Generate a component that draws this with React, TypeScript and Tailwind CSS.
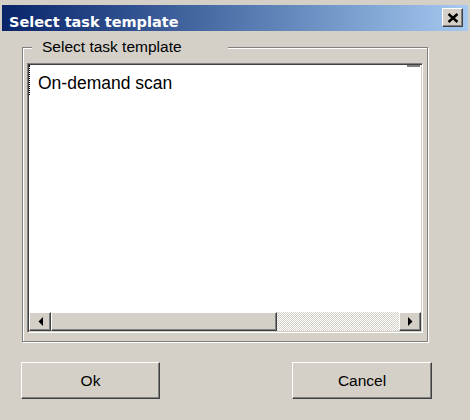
import React from "react";

const raised =
  "border border-t-white border-l-white border-r-[#404040] border-b-[#404040] shadow-[inset_-1px_-1px_0_#808080]";

function ScrollArrow({ dir }: { dir: "left" | "right" }) {
  return (
    <div className={`w-[22px] h-full bg-[#d4d0c8] flex items-center justify-center ${raised}`}>
      <svg width="5" height="9" viewBox="0 0 5 9">
        <polygon points={dir === "left" ? "5,0 5,9 0.5,4.5" : "0,0 0,9 4.5,4.5"} fill="#000" />
      </svg>
    </div>
  );
}

export default function App() {
  return (
    <div className="w-[470px] h-[420px] bg-[#d4d0c8] overflow-hidden font-['Liberation_Sans',Arial,sans-serif] text-black">
      {/* title bar */}
      <div className="mt-[5px] mx-[2px] h-[26px] flex justify-between bg-gradient-to-r from-[#0a246a] to-[#a6caf0]">
        <div className="pl-[7px] pt-[8px] text-[14.5px] leading-[18px] font-bold text-white font-['DejaVu_Sans',sans-serif]">
          Select task template
        </div>
        <button
          className={`mt-[3px] mr-[5px] w-[21px] h-[19px] bg-[#d4d0c8] flex items-center justify-center ${raised}`}
        >
          <svg width="12" height="10" viewBox="0 0 12 10">
            <path d="M1.5 1 L10.5 9 M10.5 1 L1.5 9" stroke="#000" strokeWidth="2.4" />
          </svg>
        </button>
      </div>

      {/* group box */}
      <div className="relative ml-[22px] mt-[16px] w-[406px] h-[295px] border border-[#808080] shadow-[inset_1px_1px_0_#fff,1px_1px_0_#fff] pl-[4px] pt-[15px]">
        <div className="absolute left-[9px] top-[-10px] w-[196px] bg-[#d4d0c8] pl-[10px] text-[15.5px] leading-[18px]">
          Select task template
        </div>

        {/* list box */}
        <div className="relative w-[396px] h-[270px] bg-white flex flex-col border border-t-[#808080] border-l-[#808080] border-r-white border-b-white shadow-[inset_1px_1px_0_#404040,inset_-1px_-1px_0_#d4d0c8] p-[1px]">
          <div className="absolute right-[2px] top-[1px] w-[13px] h-[2px] bg-[#808080]" />
          <div className="flex-1">
            <div className="h-[30px] pt-[7px] pl-[8px] border-l border-dotted border-black text-[17.5px] leading-[22px]">
              On-demand scan
            </div>
          </div>
          {/* horizontal scrollbar */}
          <div className="h-[19px] flex">
            <ScrollArrow dir="left" />
            <div className={`w-[226px] h-full bg-[#d4d0c8] ${raised}`} />
            <div className="flex-1 h-full bg-[image:repeating-conic-gradient(#ffffff_0%_25%,#d4d0c8_0%_50%)] bg-[length:2px_2px]" />
            <ScrollArrow dir="right" />
          </div>
        </div>
      </div>

      {/* buttons */}
      <div className="mt-[20px] ml-[21px] flex gap-[132px]">
        <button className={`w-[139px] h-[37px] bg-[#d4d0c8] text-[15.5px] ${raised}`}>Ok</button>
        <button className={`w-[140px] h-[37px] bg-[#d4d0c8] text-[15.5px] ${raised}`}>Cancel</button>
      </div>
    </div>
  );
}
